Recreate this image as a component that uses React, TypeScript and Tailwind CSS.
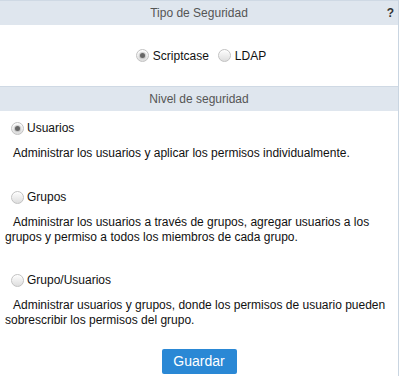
import React from "react";

function Radio({ checked }: { checked?: boolean }) {
  return (
    <span className="relative inline-flex h-[13px] w-[13px] shrink-0 items-center justify-center rounded-full border border-[#c2c2c2] bg-gradient-to-b from-[#fdfdfd] to-[#dedede] shadow-[inset_0_1px_1px_rgba(255,255,255,0.8)]">
      {checked && (
        <span className="h-[5px] w-[5px] rounded-full bg-[#666] shadow-[0_0_1px_1px_rgba(140,140,140,0.4)]" />
      )}
    </span>
  );
}

function Header({ title, help }: { title: string; help?: boolean }) {
  return (
    <div className="relative h-[25px] border-t border-[#cfd9e4] bg-[#dfe6ee] text-center text-[12px] leading-[24px] text-[#555]">
      {title}
      {help && (
        <span className="absolute right-[4px] top-0 text-[12px] font-bold leading-[24px] text-[#333]">?</span>
      )}
    </div>
  );
}

function Option({
  label,
  desc,
  checked,
  gap,
}: {
  label: string;
  desc: string;
  checked?: boolean;
  gap: string;
}) {
  return (
    <div className={gap}>
      <div className="flex h-[18px] items-center pl-[6px]">
        <Radio checked={checked} />
        <span className="ml-[3px] leading-[18px]">{label}</span>
      </div>
      <p className="mt-[9px] indent-[8px] leading-[15px]">{desc}</p>
    </div>
  );
}

export default function App() {
  return (
    <div
      className="h-[376px] w-[399px] overflow-hidden border-r border-[#c9d5e1] bg-white text-[12px] text-[#111]"
      style={{ fontFamily: '"Liberation Sans", Arial, sans-serif' }}
    >
      <Header title="Tipo de Seguridad" help />
      <div className="flex h-[61px] items-center justify-center pl-[4px]">
        <Radio checked />
        <span className="ml-[4px] mr-[9px]">Scriptcase</span>
        <Radio />
        <span className="ml-[4px]">LDAP</span>
      </div>
      <Header title="Nivel de seguridad" />
      <div className="px-[5px] pt-[8px]">
        <Option
          label="Usuarios"
          checked
          gap=""
          desc="Administrar los usuarios y aplicar los permisos individualmente."
        />
        <Option
          label="Grupos"
          gap="mt-[27px]"
          desc="Administrar los usuarios a través de grupos, agregar usuarios a los grupos y permiso a todos los miembros de cada grupo."
        />
        <Option
          label="Grupo/Usuarios"
          gap="mt-[26px]"
          desc="Administrar usuarios y grupos, donde los permisos de usuario pueden sobrescribir los permisos del grupo."
        />
        <div className="mt-[21px] flex justify-center">
          <button className="h-[25px] w-[75px] rounded-[2px] bg-[#2a88d5] text-[14px] text-white">
            Guardar
          </button>
        </div>
      </div>
    </div>
  );
}
